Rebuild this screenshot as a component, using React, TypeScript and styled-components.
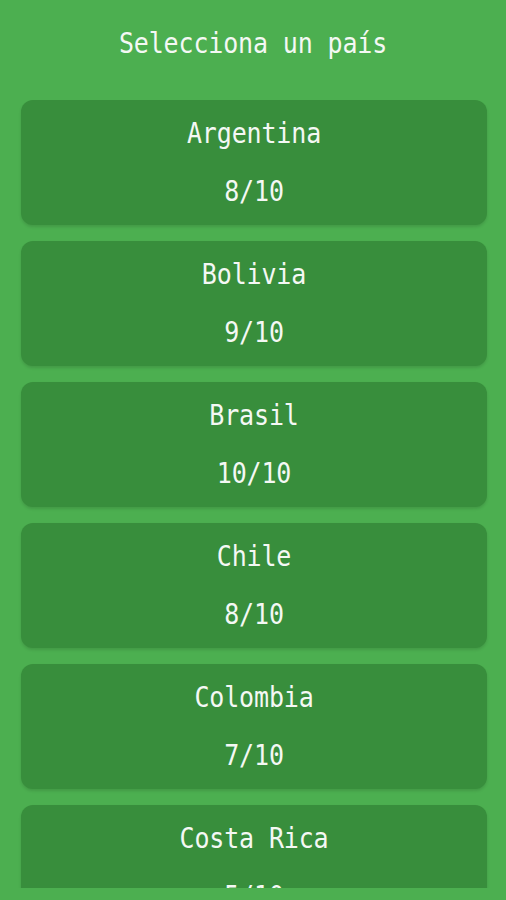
import React from "react";
import styled, { createGlobalStyle } from "styled-components";

const Global = createGlobalStyle`
  html, body { margin: 0; padding: 0; background: #4caf50; }
  body { font-family: "DejaVu Sans Mono", "Liberation Mono", monospace; }
`;

const Screen = styled.div`
  width: 506px;
  height: 900px;
  background: #4caf50;
  display: flex;
  flex-direction: column;
  overflow: hidden;
`;

const Title = styled.h1`
  margin: 0;
  height: 100px;
  display: flex;
  justify-content: center;
  align-items: flex-start;
  padding-top: 26px;
  box-sizing: border-box;
  font-size: 25px;
  line-height: 36px;
  font-weight: normal;
  color: #f4f8f4;
  letter-spacing: -0.15px;
  transform: scaleY(1.1);
  transform-origin: 50% 44px;
`;

const List = styled.div`
  height: 788px;
  overflow: hidden;
  display: flex;
  flex-direction: column;
  gap: 16px;
  padding: 0 19px 0 21px;
`;

const Card = styled.div`
  flex: 0 0 auto;
  height: 125px;
  box-sizing: border-box;
  background: #388e3c;
  border-radius: 12px;
  box-shadow: 0 2px 3px rgba(0, 0, 0, 0.12);
  display: flex;
  flex-direction: column;
  align-items: center;
  padding-top: 14px;
  gap: 18px;
  color: #f4f8f4;
`;

const Line = styled.div`
  font-size: 25px;
  line-height: 40px;
  letter-spacing: -0.15px;
  transform: scaleY(1.1);
`;

const countries = [
  { name: "Argentina", score: "8/10" },
  { name: "Bolivia", score: "9/10" },
  { name: "Brasil", score: "10/10" },
  { name: "Chile", score: "8/10" },
  { name: "Colombia", score: "7/10" },
  { name: "Costa Rica", score: "5/10" },
];

export default function App() {
  return (
    <Screen>
      <Global />
      <Title>Selecciona un país</Title>
      <List>
        {countries.map((c) => (
          <Card key={c.name}>
            <Line>{c.name}</Line>
            <Line>{c.score}</Line>
          </Card>
        ))}
      </List>
    </Screen>
  );
}
